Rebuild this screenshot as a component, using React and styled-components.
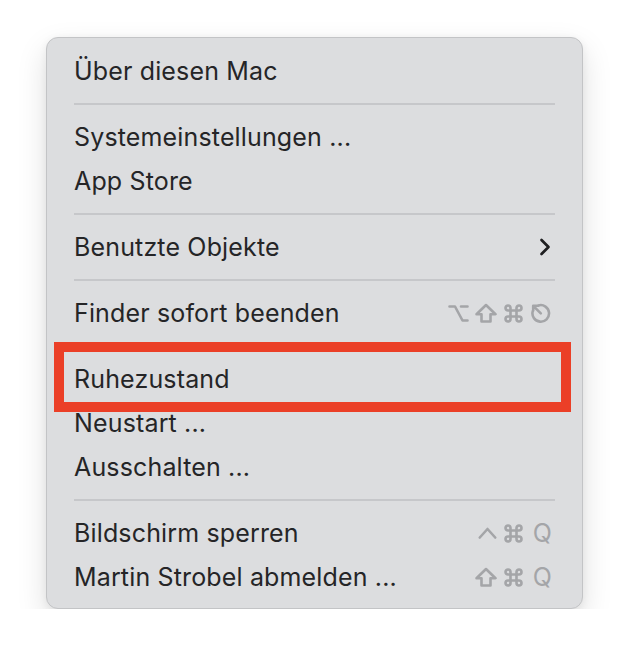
import React from "react";
import styled, { createGlobalStyle } from "styled-components";

const GlobalStyle = createGlobalStyle`
  body {
    margin: 0;
    background: #ffffff;
    font-family: Inter, "Liberation Sans", sans-serif;
  }
`;

const Stage = styled.div`
  padding: 37px 0 0 46px;
`;

const Menu = styled.div`
  position: relative;
  box-sizing: border-box;
  width: 537px;
  padding: 11px 0 9px;
  background: #dcdddf;
  border: 1px solid #c3c4c6;
  border-radius: 12px;
  box-shadow: 0 12px 30px rgba(0, 0, 0, 0.13), 0 2px 8px rgba(0, 0, 0, 0.06);
`;

const Item = styled.div`
  display: flex;
  align-items: center;
  justify-content: space-between;
  height: 44px;
  padding: 0 30px 0 27px;
  font-size: 25px;
  color: #252527;
  letter-spacing: 0.15px;
`;

const Separator = styled.div`
  height: 2px;
  margin: 10px 27px 10px 27px;
  background: #c6c7ca;
`;

const Keys = styled.div`
  display: flex;
  align-items: center;
  gap: 6px;
  color: #a4a5a8;
`;

const KeyLetter = styled.span`
  font-size: 25px;
  line-height: 1;
  margin-left: 3px;
  color: #a4a5a8;
`;

const Highlight = styled.div`
  position: absolute;
  left: 7px;
  top: 304px;
  width: 517px;
  height: 70px;
  box-sizing: border-box;
  border: 10px solid #eb3f27;
  pointer-events: none;
`;

const Glyph = ({ w = 21, h = 21, children, sw = 2.6 }) => (
  <svg width={w} height={h} viewBox={`0 0 ${w} ${h}`} fill="none" stroke="currentColor"
    strokeWidth={sw} strokeLinecap="round" strokeLinejoin="round">
    {children}
  </svg>
);

const Option = () => (
  <Glyph w={21}>
    <path d="M1.5 3.5 H7 L14.5 17.5 H19.5 M13 3.5 H19.5" />
  </Glyph>
);

const Shift = () => (
  <Glyph w={22}>
    <path d="M11 2 L20.5 11.2 H15.5 V18.5 H6.5 V11.2 H1.5 Z" />
  </Glyph>
);

const Command = () => (
  <Glyph w={21}>
    <path d="M7.5 7.5 H13.5 V13.5 H7.5 Z" />
    <path d="M7.5 7.5 H5 A2.5 2.5 0 1 1 7.5 5 Z" />
    <path d="M13.5 7.5 V5 A2.5 2.5 0 1 1 16 7.5 Z" />
    <path d="M13.5 13.5 H16 A2.5 2.5 0 1 1 13.5 16 Z" />
    <path d="M7.5 13.5 V16 A2.5 2.5 0 1 1 5 13.5 Z" />
  </Glyph>
);

const Escape = () => (
  <Glyph w={22}>
    <path d="M8.5 2.4 A8.3 8.3 0 1 1 2.8 8" />
    <path d="M3.2 2.8 L10.8 10.4 M3.2 2.8 H8 M3.2 2.8 V7.6" />
  </Glyph>
);

const Control = () => (
  <Glyph w={19} h={14}>
    <path d="M1.8 11.5 L9.5 3 L17.2 11.5" />
  </Glyph>
);

const Chevron = styled.svg`
  width: 12px;
  height: 18px;
  margin-right: 1px;
`;

const Submenu = () => (
  <Chevron viewBox="0 0 12 18" fill="none" stroke="#1f1f21" strokeWidth="2.7"
    strokeLinecap="round" strokeLinejoin="round">
    <path d="M2.5 2 L9.5 9 L2.5 16" />
  </Chevron>
);

export default function App() {
  return (
    <Stage>
      <GlobalStyle />
      <Menu>
        <Item>Über diesen Mac</Item>
        <Separator />
        <Item>Systemeinstellungen ...</Item>
        <Item>App Store</Item>
        <Separator />
        <Item>
          Benutzte Objekte
          <Submenu />
        </Item>
        <Separator />
        <Item>
          Finder sofort beenden
          <Keys>
            <Option />
            <Shift />
            <Command />
            <Escape />
          </Keys>
        </Item>
        <Separator />
        <Item>Ruhezustand</Item>
        <Item>Neustart ...</Item>
        <Item>Ausschalten ...</Item>
        <Separator />
        <Item>
          Bildschirm sperren
          <Keys>
            <Control />
            <Command />
            <KeyLetter>Q</KeyLetter>
          </Keys>
        </Item>
        <Item>
          Martin Strobel abmelden ...
          <Keys>
            <Shift />
            <Command />
            <KeyLetter>Q</KeyLetter>
          </Keys>
        </Item>
        <Highlight />
      </Menu>
    </Stage>
  );
}
